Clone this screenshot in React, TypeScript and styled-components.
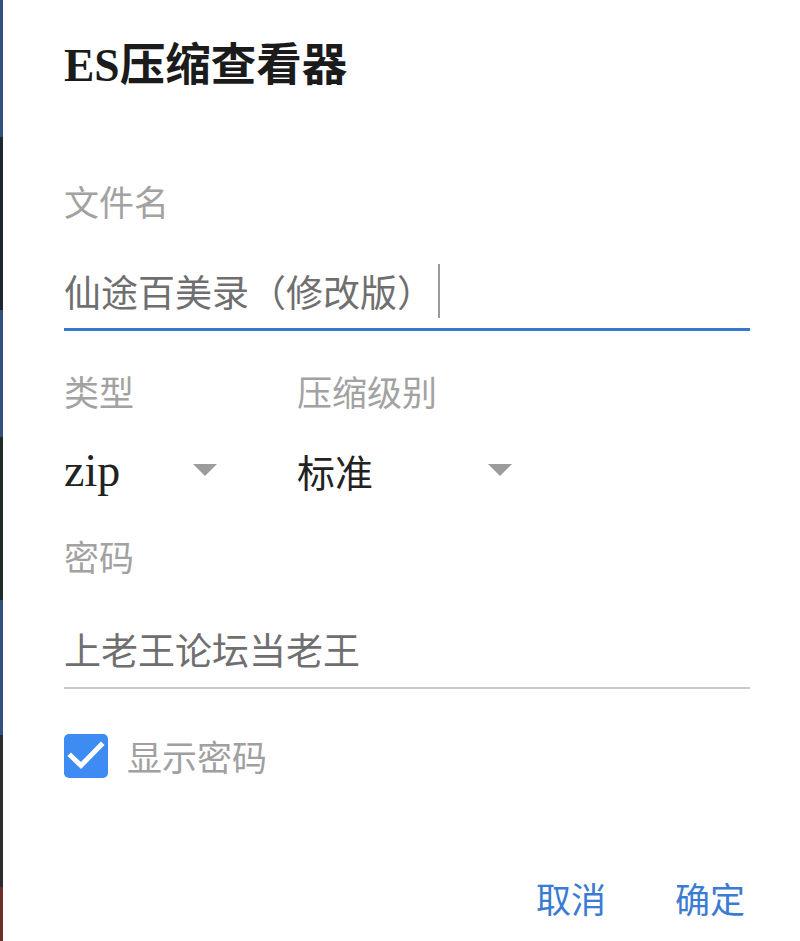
import React from "react";
import styled, { createGlobalStyle } from "styled-components";

const GlobalStyle = createGlobalStyle`
  html, body {
    margin: 0;
    padding: 0;
    background: #ffffff;
  }
  body {
    font-family: "Noto Sans CJK SC", "Noto Sans", sans-serif;
  }
`;

const Page = styled.div`
  display: flex;
  flex-direction: row;
  width: 800px;
  height: 941px;
  overflow: hidden;
  background: #ffffff;
`;

const Strip = styled.div`
  display: flex;
  flex-direction: column;
  width: 3px;
  flex: none;
`;

const Segment = styled.div<{ $h: number; $c: string }>`
  height: ${(p) => p.$h}px;
  background: ${(p) => p.$c};
  flex: none;
`;

const Dialog = styled.div`
  flex: 1;
  display: flex;
  flex-direction: column;
  padding: 0 50px 0 61px;
  background: #ffffff;
`;

const Title = styled.h1`
  margin: 43px 0 0 0;
  font-family: "Liberation Serif", "Noto Sans CJK SC", serif;
  font-weight: 700;
  font-size: 45.5px;
  line-height: 46px;
  color: #1b1b1b;
  letter-spacing: 0;
`;

const Label = styled.div<{ $mt: number }>`
  margin-top: ${(p) => p.$mt}px;
  font-family: "Noto Sans CJK SC", sans-serif;
  font-size: 35px;
  line-height: 35px;
  color: #a2a2a2;
`;

const InputRow = styled.div<{ $mt: number; $focused?: boolean }>`
  margin-top: ${(p) => p.$mt}px;
  display: flex;
  align-items: center;
  height: 54px;
  padding-bottom: ${(p) => (p.$focused ? 10 : 11)}px;
  border-bottom: ${(p) => (p.$focused ? "3px solid #3478d4" : "2px solid #c9c9c9")};
`;

const InputValue = styled.span`
  font-family: "Noto Sans CJK SC", sans-serif;
  font-size: 37px;
  line-height: 54px;
  color: #6f6f6f;
  white-space: nowrap;
`;

const Caret = styled.span`
  display: block;
  width: 1.5px;
  height: 54px;
  margin-left: 4px;
  background: #9a9a9a;
`;

const SelectsRow = styled.div`
  display: flex;
  flex-direction: row;
  margin-top: 42px;
`;

const SelectColumn = styled.div<{ $w: number }>`
  display: flex;
  flex-direction: column;
  width: ${(p) => p.$w}px;
  flex: none;
`;

const Select = styled.div<{ $w: number }>`
  display: flex;
  align-items: center;
  justify-content: space-between;
  width: ${(p) => p.$w}px;
  height: 60px;
  margin-top: 33px;
  padding-right: 12px;
  box-sizing: border-box;
`;

const SelectValue = styled.span<{ $latin?: boolean }>`
  font-family: ${(p) =>
    p.$latin ? `"Liberation Serif", serif` : `"Noto Sans CJK SC", sans-serif`};
  font-size: ${(p) => (p.$latin ? 46 : 38)}px;
  line-height: 60px;
  color: #222222;
`;

const Arrow = styled.span`
  display: block;
  width: 0;
  height: 0;
  border-left: 12px solid transparent;
  border-right: 12px solid transparent;
  border-top: 12px solid #9c9c9c;
  margin-top: -2px;
`;

const CheckRow = styled.label`
  display: flex;
  align-items: center;
  gap: 19px;
  margin-top: 45px;
`;

const CheckBox = styled.span`
  display: flex;
  align-items: center;
  justify-content: center;
  width: 44px;
  height: 44px;
  border-radius: 5px;
  background: #3e8bf3;
  flex: none;
`;

const CheckText = styled.span`
  font-family: "Noto Sans CJK SC", sans-serif;
  font-size: 35px;
  line-height: 44px;
  color: #a0a0a0;
`;

const ButtonRow = styled.div`
  display: flex;
  justify-content: flex-end;
  gap: 59px;
  margin-top: auto;
  margin-bottom: 13px;
`;

const TextButton = styled.button`
  border: none;
  background: transparent;
  padding: 0 5px;
  height: 60px;
  font-family: "Noto Sans CJK SC", sans-serif;
  font-size: 35px;
  line-height: 60px;
  color: #3a7bd3;
  cursor: pointer;
`;

const segments = [
  { h: 137, c: "#34507f" },
  { h: 173, c: "#1b2830" },
  { h: 127, c: "#34507f" },
  { h: 163, c: "#1f2b29" },
  { h: 135, c: "#34507f" },
  { h: 152, c: "#2a2c2d" },
  { h: 54, c: "#6e2f2c" },
];

export default function App() {
  return (
    <>
      <GlobalStyle />
      <Page>
        <Strip>
          {segments.map((s, i) => (
            <Segment key={i} $h={s.h} $c={s.c} />
          ))}
        </Strip>
        <Dialog>
          <Title>ES压缩查看器</Title>

          <Label $mt={94}>文件名</Label>
          <InputRow $mt={46} $focused>
            <InputValue>仙途百美录（修改版）</InputValue>
            <Caret />
          </InputRow>

          <SelectsRow>
            <SelectColumn $w={233}>
              <Label $mt={0}>类型</Label>
              <Select $w={165}>
                <SelectValue $latin>zip</SelectValue>
                <Arrow />
              </Select>
            </SelectColumn>
            <SelectColumn $w={240}>
              <Label $mt={0}>压缩级别</Label>
              <Select $w={227}>
                <SelectValue>标准</SelectValue>
                <Arrow />
              </Select>
            </SelectColumn>
          </SelectsRow>

          <Label $mt={37}>密码</Label>
          <InputRow $mt={49}>
            <InputValue>上老王论坛当老王</InputValue>
          </InputRow>

          <CheckRow>
            <CheckBox>
              <svg width="44" height="44" viewBox="0 0 44 44">
                <polyline
                  points="7,22 17,31.5 37,11"
                  fill="none"
                  stroke="#ffffff"
                  strokeWidth="5"
                  strokeLinecap="square"
                />
              </svg>
            </CheckBox>
            <CheckText>显示密码</CheckText>
          </CheckRow>

          <ButtonRow>
            <TextButton>取消</TextButton>
            <TextButton>确定</TextButton>
          </ButtonRow>
        </Dialog>
      </Page>
    </>
  );
}
